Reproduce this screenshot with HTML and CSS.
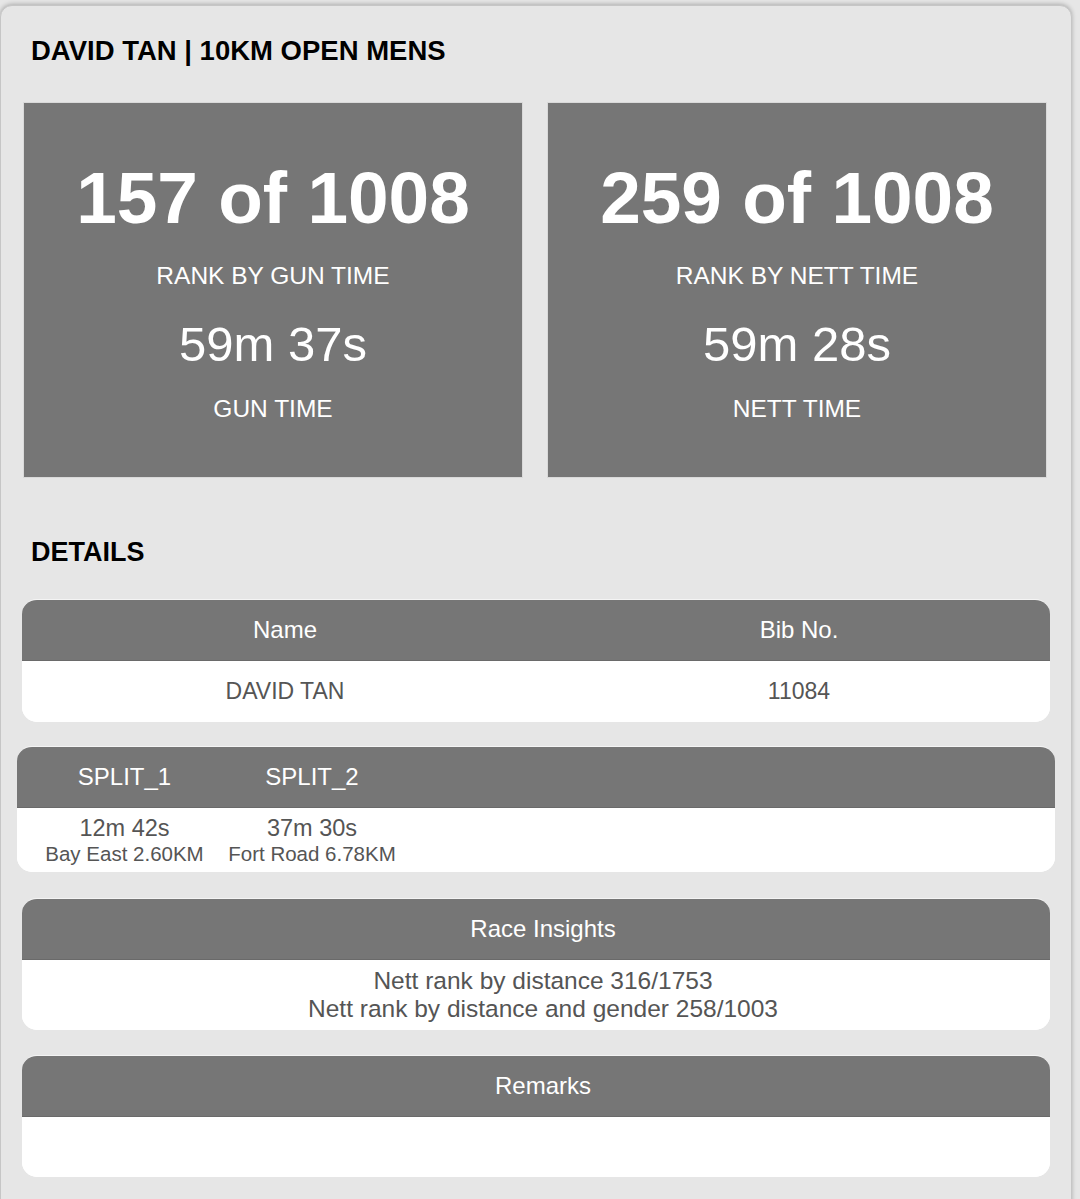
FILE: index.html
```html
<!DOCTYPE html>
<html lang="en">
<head>
<meta charset="utf-8">
<title>DAVID TAN | 10KM OPEN MENS</title>
<link rel="stylesheet" href="styles.css">
</head>
<body>
<div class="card">
  <h1 class="title">DAVID TAN | 10KM OPEN MENS</h1>
  <div class="stats">
    <div class="stat">
      <div class="stat-rank">157 of 1008</div>
      <div class="stat-label">RANK BY GUN TIME</div>
      <div class="stat-time">59m 37s</div>
      <div class="stat-label stat-label-last">GUN TIME</div>
    </div>
    <div class="stat">
      <div class="stat-rank">259 of 1008</div>
      <div class="stat-label">RANK BY NETT TIME</div>
      <div class="stat-time">59m 28s</div>
      <div class="stat-label stat-label-last">NETT TIME</div>
    </div>
  </div>

  <h2 class="title title-details">DETAILS</h2>

  <div class="tbl tbl-name">
    <div class="tbl-head cols-2">
      <div class="cell">Name</div>
      <div class="cell">Bib No.</div>
    </div>
    <div class="tbl-body cols-2">
      <div class="cell">DAVID TAN</div>
      <div class="cell">11084</div>
    </div>
  </div>

  <div class="tbl tbl-splits">
    <div class="tbl-head splits-grid">
      <div class="cell">SPLIT_1</div>
      <div class="cell">SPLIT_2</div>
    </div>
    <div class="tbl-body splits-grid">
      <div class="cell split">
        <div class="split-time">12m 42s</div>
        <div class="split-loc">Bay East 2.60KM</div>
      </div>
      <div class="cell split">
        <div class="split-time">37m 30s</div>
        <div class="split-loc">Fort Road 6.78KM</div>
      </div>
    </div>
  </div>

  <div class="tbl tbl-insights">
    <div class="tbl-head single">
      <div class="cell">Race Insights</div>
    </div>
    <div class="tbl-body single insights-body">
      <div class="cell">Nett rank by distance 316/1753<br>Nett rank by distance and gender 258/1003</div>
    </div>
  </div>

  <div class="tbl tbl-remarks">
    <div class="tbl-head single">
      <div class="cell">Remarks</div>
    </div>
    <div class="tbl-body single remarks-body">
      <div class="cell"></div>
    </div>
  </div>
</div>
</body>
</html>
```

FILE: styles.css
```css
html, body {
  margin: 0;
  padding: 0;
}

body {
  background: #e6e6e6;
  font-family: "Liberation Sans", Arial, sans-serif;
  height: 1199px;
  overflow: hidden;
}

.card {
  margin-top: 5px;
  width: 1070px;
  min-height: 1200px;
  background: #e6e6e6;
  border: 1px solid #c6c6c6;
  border-radius: 12px 12px 0 0;
  box-shadow: 0 -1px 4px rgba(0, 0, 0, 0.25);
  padding: 30px 0 0 0;
  box-sizing: content-box;
}

.title {
  margin: 0 0 0 30px;
  font-size: 27.5px;
  line-height: 30px;
  font-weight: bold;
  color: #000;
  text-shadow: 0 0 1px rgba(255, 255, 255, 0.8);
}

.stats {
  display: grid;
  grid-template-columns: 1fr 1fr;
  gap: 24px;
  margin: 36px 24px 0 22px;
}

.stat {
  background: #767676;
  border: 1px solid #d9d9d9;
  color: #fff;
  text-align: center;
  padding: 59px 0 54px;
}

.stat-rank {
  font-size: 73px;
  line-height: 72px;
  font-weight: bold;
}

.stat-label {
  font-size: 24.5px;
  line-height: 28px;
  margin-top: 28px;
}

.stat-time {
  font-size: 49px;
  line-height: 48px;
  margin-top: 30px;
}

.stat-label-last {
  margin-top: 27px;
}

.title-details {
  margin-top: 59px;
  font-size: 27px;
}

.tbl {
  border-radius: 15px;
  overflow: hidden;
  background: #fff;
  border-top: 1px solid #f4f4f4;
}

.tbl-name {
  margin: 32px 21px 0 21px;
}

.tbl-splits {
  margin: 24px 16px 0 16px;
}

.tbl-insights {
  margin: 26px 21px 0 21px;
}

.tbl-remarks {
  margin: 25px 21px 0 21px;
}

.tbl-head {
  background: #767676;
  color: #fff;
  font-size: 24px;
  height: 60px;
  align-items: center;
  border-bottom: 1px solid #6a6a6a;
}

.tbl-body {
  background: #fff;
  color: #555;
  font-size: 23px;
  align-items: center;
}

.cols-2 {
  display: grid;
  grid-template-columns: 526px 1fr;
  text-align: center;
}

.tbl-name .tbl-body {
  height: 61px;
}

.splits-grid {
  display: grid;
  grid-template-columns: 183px 192px;
  padding-left: 16px;
  text-align: center;
}

.tbl-splits .tbl-body {
  height: 64px;
}

.split-time {
  font-size: 23.5px;
  line-height: 27px;
}

.split-loc {
  font-size: 20.5px;
  line-height: 24px;
}

.single {
  display: flex;
  justify-content: center;
  text-align: center;
  padding-left: 14px;
}

.insights-body {
  height: 70px;
  font-size: 24.5px;
  line-height: 28px;
}

.remarks-body {
  height: 60px;
}
```
